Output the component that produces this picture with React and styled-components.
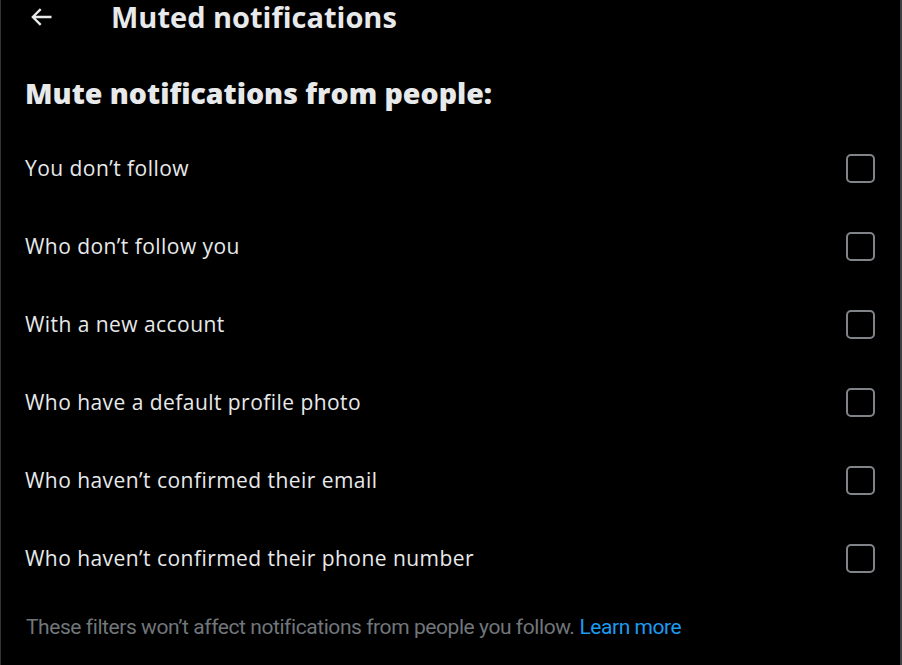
import React from "react";
import styled, { createGlobalStyle } from "styled-components";

const GlobalStyle = createGlobalStyle`
  html, body {
    margin: 0;
    padding: 0;
    background: #000;
  }
  body {
    font-family: "Open Sans", "Noto Sans", sans-serif;
    color: #e7e9ea;
  }
`;

const Panel = styled.div`
  width: 902px;
  height: 665px;
  box-sizing: border-box;
  border-left: 1px solid #2f3336;
  border-right: 2px solid #3e4144;
  background: #000;
  overflow: hidden;
  display: flex;
  flex-direction: column;
`;

const Header = styled.div`
  height: 34px;
  display: flex;
  align-items: center;
  padding-left: 26px;
`;

const BackButton = styled.button`
  width: 28px;
  height: 28px;
  padding: 0;
  border: 0;
  background: none;
  color: #e7e9ea;
  display: flex;
  align-items: center;
  justify-content: center;
  margin-right: 56px;
  cursor: pointer;
`;

const Title = styled.h1`
  margin: 0;
  font-size: 29px;
  line-height: 34px;
  font-weight: 700;
`;

const SectionTitle = styled.h2`
  margin: 0;
  height: 95px;
  box-sizing: border-box;
  padding: 22px 0 0 24px;
  display: flex;
  align-items: center;
  font-size: 28.5px;
  font-weight: 800;
`;

const Row = styled.label`
  height: 78px;
  display: flex;
  align-items: center;
  justify-content: space-between;
  padding: 0 25px 0 24px;
  font-size: 21px;
  letter-spacing: 0.45px;
  cursor: pointer;
`;

const Box = styled.span`
  width: 29px;
  height: 29px;
  box-sizing: border-box;
  border: 2px solid #808488;
  border-radius: 5px;
`;

const Footer = styled.p`
  margin: 0;
  height: 60px;
  display: flex;
  align-items: center;
  padding-left: 25px;
  font-family: Roboto, "Liberation Sans", sans-serif;
  font-size: 21px;
  letter-spacing: -0.43px;
  color: #71767b;
`;

const Link = styled.a`
  color: #1d9bf0;
  text-decoration: none;
  margin-left: 5px;
`;

const options = [
  "You don’t follow",
  "Who don’t follow you",
  "With a new account",
  "Who have a default profile photo",
  "Who haven’t confirmed their email",
  "Who haven’t confirmed their phone number",
];

function ArrowLeft() {
  return (
    <svg width="28" height="28" viewBox="0 0 24 24" fill="currentColor">
      <path d="M7.414 13l5.043 5.04-1.414 1.42L3.586 12l7.457-7.46 1.414 1.42L7.414 11H21v2H7.414z" />
    </svg>
  );
}

export default function App() {
  return (
    <>
      <GlobalStyle />
      <Panel>
        <Header>
          <BackButton aria-label="Back">
            <ArrowLeft />
          </BackButton>
          <Title>Muted notifications</Title>
        </Header>
        <SectionTitle>Mute notifications from people:</SectionTitle>
        {options.map((text) => (
          <Row key={text}>
            <span>{text}</span>
            <Box />
          </Row>
        ))}
        <Footer>
          These filters won’t affect notifications from people you follow.
          <Link href="#">Learn more</Link>
        </Footer>
      </Panel>
    </>
  );
}
